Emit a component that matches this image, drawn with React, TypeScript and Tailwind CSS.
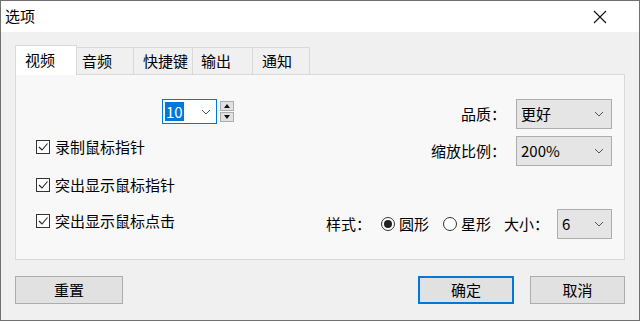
import React from "react";

const font = { fontFamily: '"Noto Sans CJK SC", "Noto Sans", sans-serif' };

const Chevron: React.FC = () => (
  <svg width="10" height="6" viewBox="0 0 10 6" className="shrink-0">
    <path d="M1 1 L5 5 L9 1" fill="none" stroke="#555" strokeWidth="1" />
  </svg>
);

const Select: React.FC<{ value: string; w: string }> = ({ value, w }) => (
  <div
    className={`flex h-[30px] ${w} items-center justify-between border border-[#adadad] bg-[#e5e5e5] pl-[4px] pr-[7px] text-[15px]`}
  >
    <span>{value}</span>
    <Chevron />
  </div>
);

const Check: React.FC<{ label: string }> = ({ label }) => (
  <div className="flex h-[20px] items-center gap-[5px] text-[15px]">
    <span className="flex h-[14px] w-[14px] items-center justify-center border border-[#333] bg-white">
      <svg width="12" height="12" viewBox="0 0 12 12">
        <path d="M2 6 L5 9 L10.5 2.5" fill="none" stroke="#222" strokeWidth="1.1" />
      </svg>
    </span>
    <span>{label}</span>
  </div>
);

const Radio: React.FC<{ label: string; checked?: boolean }> = ({ label, checked }) => (
  <div className="flex items-center gap-[4px]">
    <span className="flex h-[14px] w-[14px] items-center justify-center rounded-full border border-[#333] bg-white">
      {checked && <span className="h-[8px] w-[8px] rounded-full bg-[#222]" />}
    </span>
    <span>{label}</span>
  </div>
);

const Button: React.FC<{ label: string; w: string; primary?: boolean }> = ({ label, w, primary }) => (
  <div
    className={`flex h-[28px] ${w} items-center justify-center bg-[#e1e1e1] text-[15px] ${
      primary ? "border-2 border-[#0078d7]" : "border border-[#adadad]"
    }`}
  >
    {label}
  </div>
);

const tabs = [
  { label: "视频", w: "w-[62px]", pl: "pl-[9px]" },
  { label: "音频", w: "w-[57px]", pl: "pl-[5px]" },
  { label: "快捷键", w: "w-[59px]", pl: "pl-[9px]" },
  { label: "输出", w: "w-[60px]", pl: "pl-[8px]" },
  { label: "通知", w: "w-[57px]", pl: "pl-[9px]" },
];

export default function App() {
  return (
    <div
      className="flex h-[321px] w-[640px] flex-col overflow-hidden border border-[#707070] text-black"
      style={font}
    >
      {/* title bar */}
      <div className="flex h-[31px] shrink-0 items-center justify-between bg-white pl-[4px] pr-[32px]">
        <span className="text-[15px]">选项</span>
        <svg width="14" height="14" viewBox="0 0 14 14">
          <path d="M1 1 L13 13 M13 1 L1 13" stroke="#111" strokeWidth="1.1" />
        </svg>
      </div>

      <div className="flex flex-1 flex-col bg-[#f0f0f0] px-[14px] pt-[15px]">
        {/* tabs */}
        <div className="flex h-[27px] items-end">
          {tabs.map((t, i) =>
            i === 0 ? (
              <div
                key={t.label}
                className={`relative z-10 -mb-px flex h-[30px] ${t.w} items-start ${t.pl} border border-b-0 border-[#d9d9d9] bg-white pt-[3px] text-[15px]`}
              >
                {t.label}
              </div>
            ) : (
              <div
                key={t.label}
                className={`flex h-[27px] ${t.w} items-center ${t.pl} border border-l-0 border-b-0 border-[#d9d9d9] bg-[#f0f0f0] text-[15px]`}
              >
                {t.label}
              </div>
            )
          )}
        </div>

        {/* panel */}
        <div className="flex h-[186px] justify-between border border-[#d9d9d9] bg-[#f8f8f8] pl-[20px] pr-[12px] pt-[24px]">
          <div className="flex flex-col">
            <div className="ml-[126px] flex items-center gap-[3px]">
              <div className="flex h-[25px] w-[55px] items-center justify-between border border-[#0078d7] bg-white pl-[2px] pr-[5px]">
                <span className="bg-[#0078d7] px-[1px] text-[15px] leading-[19px] text-white">10</span>
                <Chevron />
              </div>
              <div className="flex flex-col gap-px">
                <div className="flex h-[10px] w-[14px] items-center justify-center border border-[#adadad] bg-[#e1e1e1]">
                  <svg width="6" height="4" viewBox="0 0 6 4"><path d="M0 4 L3 0 L6 4 Z" fill="#111" /></svg>
                </div>
                <div className="flex h-[10px] w-[14px] items-center justify-center border border-[#adadad] bg-[#e1e1e1]">
                  <svg width="6" height="4" viewBox="0 0 6 4"><path d="M0 0 L3 4 L6 0 Z" fill="#111" /></svg>
                </div>
              </div>
            </div>
            <div className="mt-[13px]">
              <Check label="录制鼠标指针" />
            </div>
            <div className="mt-[18px]">
              <Check label="突出显示鼠标指针" />
            </div>
            <div className="mt-[16px]">
              <Check label="突出显示鼠标点击" />
            </div>
          </div>

          <div className="flex flex-col items-end">
            <div className="flex items-center gap-[10px] text-[15px]">
              <span>品质：</span>
              <Select value="更好" w="w-[96px]" />
            </div>
            <div className="mt-[7px] flex items-center gap-[10px] text-[15px]">
              <span>缩放比例：</span>
              <Select value="200%" w="w-[96px]" />
            </div>
            <div className="mt-[43px] flex items-center text-[15px]">
              <span className="mr-[10px]">样式：</span>
              <Radio label="圆形" checked />
              <span className="w-[14px]" />
              <Radio label="星形" />
              <span className="ml-[13px] mr-[8px]">大小：</span>
              <Select value="6" w="w-[55px]" />
            </div>
          </div>
        </div>

        {/* buttons */}
        <div className="mt-[16px] flex items-center">
          <Button label="重置" w="w-[108px]" />
          <div className="flex-1" />
          <Button label="确定" w="w-[96px]" primary />
          <div className="w-[16px]" />
          <Button label="取消" w="w-[95px]" />
        </div>
      </div>
    </div>
  );
}
